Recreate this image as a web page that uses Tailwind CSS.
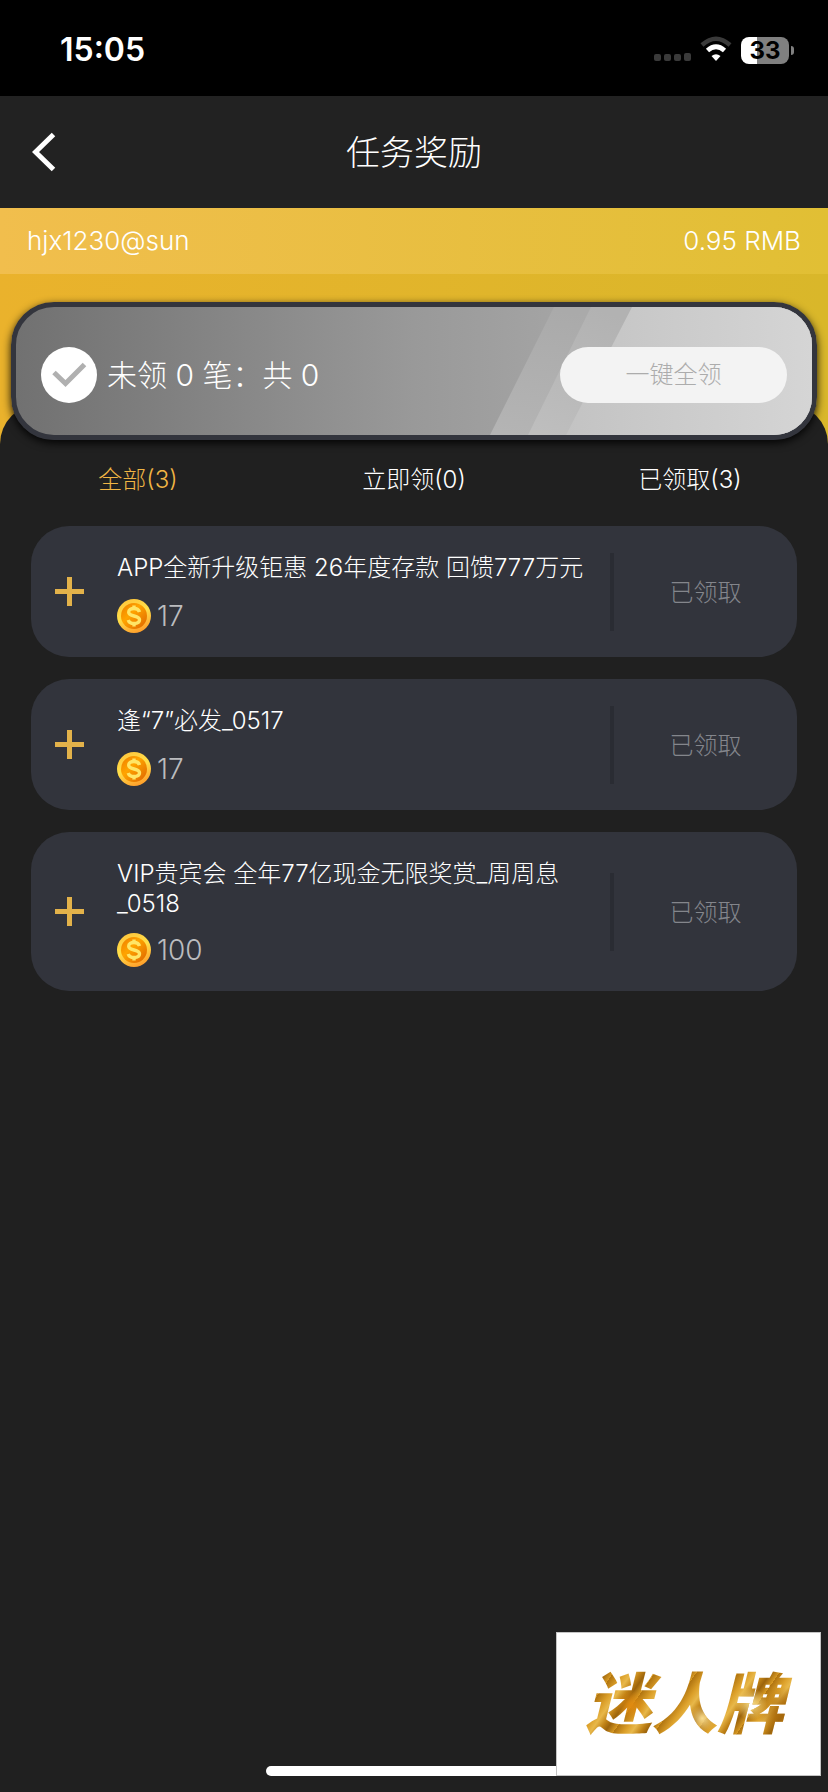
<!DOCTYPE html>
<html lang="zh-CN">
<head>
    <meta charset="UTF-8">
    <meta name="viewport" content="width=device-width, initial-scale=1.0">
    <title>任务奖励</title>
    <script src="https://cdn.jsdelivr.net/npm/@tailwindcss/browser@4"></script>
</head>
<body class="relative flex flex-col min-h-screen bg-[#202020] text-white font-light font-[Inter,'Noto_Sans_CJK_SC',sans-serif]">
    <!-- Status bar -->
    <div class="flex items-center justify-between h-24 pt-1 pl-[60px] pr-[34px] bg-black">
        <span class="text-[32px] font-semibold">15:05</span>
        <div class="flex items-center">
            <svg class="w-[38px] h-[28px]" viewBox="0 0 38 28" fill="#3a3a3a">
                <rect x="0" y="18" width="7" height="7" rx="2"/>
                <rect x="10" y="18" width="7" height="7" rx="2"/>
                <rect x="20" y="18" width="7" height="7" rx="2"/>
                <rect x="30" y="17" width="7" height="8" rx="2"/>
            </svg>
            <svg class="w-8 h-[28px] ml-2" viewBox="0 0 32 28" fill="none">
                <path d="M2 9 Q16 -3.500 30 9" stroke="#3a3a3a" stroke-width="4.5"/>
                <path d="M7.5 14.500 Q16 7 24.500 14.500" stroke="#fff" stroke-width="4.800"/>
                <path d="M16 25 L11.500 20 Q16 16.300 20.500 20 Z" fill="#fff"/>
            </svg>
            <div class="flex items-center ml-[9px]">
                <div class="w-12 h-[27px] rounded-lg bg-linear-to-r from-white from-33% to-[#808080] to-33% text-black text-2xl leading-[27px] font-bold text-center">33</div>
                <div class="w-[3px] h-[9px] ml-[2px] rounded-r-full bg-[#808080]"></div>
            </div>
        </div>
    </div>

    <!-- Title bar -->
    <header class="grid grid-cols-[1fr_auto_1fr] items-center h-28 px-8 bg-[#222222]">
        <button type="button" aria-label="返回" class="justify-self-start">
            <svg class="w-6 h-10" viewBox="0 0 24 40" fill="none" stroke="#fff" stroke-width="5">
                <path d="M21.500 2.500 L3.500 20 L21.500 37.500"/>
            </svg>
        </button>
        <h1 class="text-[34px]">任务奖励</h1>
    </header>

    <!-- Account and summary -->
    <section class="pb-2 bg-linear-to-r from-[#eab22c] to-[#d9b72a]">
        <div class="flex items-center justify-between h-[66px] px-[27px] pb-[2px] bg-linear-to-r from-[#f1be4d] to-[#e1bf34] text-[26px]">
            <span>hjx1230@sun</span>
            <span>0.95 RMB</span>
        </div>
        <div class="relative z-10 flex items-center h-[138px] mx-[11px] mt-7 pt-2 px-[25px] border-5 border-[#33353d] rounded-[43px] overflow-hidden shadow-[0_3px_8px_rgba(0,0,0,0.9)] bg-linear-to-r from-[#717171] via-[#999999] via-50% to-[#b8b8b8]">
            <svg class="absolute inset-0 w-full h-full" viewBox="0 0 796 128" preserveAspectRatio="xMaxYMid slice">
                <defs>
                    <linearGradient id="band-a" gradientUnits="userSpaceOnUse" x1="520" x2="500" y1="0" y2="128">
                        <stop offset="0" stop-color="#aaaaaa"/>
                        <stop offset="1" stop-color="#b4b4b4"/>
                    </linearGradient>
                    <linearGradient id="band-b" gradientUnits="userSpaceOnUse" x1="575" x2="530" y1="0" y2="128">
                        <stop offset="0" stop-color="#b2b2b2"/>
                        <stop offset="1" stop-color="#bebebe"/>
                    </linearGradient>
                    <linearGradient id="shine" x1="0" x2="1" y1="0" y2="0">
                        <stop offset="0" stop-color="#c3c3c3"/>
                        <stop offset="1" stop-color="#d5d5d5"/>
                    </linearGradient>
                </defs>
                <path d="M474 128 L538 0 H796 V128 Z" fill="url(#band-a)"/>
                <path d="M512 128 L575 0 H796 V128 Z" fill="url(#band-b)"/>
                <path d="M550 128 L616 0 H796 V128 Z" fill="url(#shine)"/>
            </svg>
            <svg class="relative w-14 h-14" viewBox="0 0 56 56" fill="none">
                <circle cx="28" cy="28" r="28" fill="#fff"/>
                <path d="M13 25.500 L24.500 36.500 L43.500 17.500" stroke="#b0b0b0" stroke-width="5"/>
            </svg>
            <p class="relative ml-[10px] text-[30px]">未领 0 笔：共 0</p>
            <button type="button" class="relative ml-auto w-[227px] h-14 rounded-full bg-[#f3f3f3] text-[#acacac] text-2xl">一键全领</button>
        </div>
    </section>

    <main class="-mt-11 pt-[52px] rounded-t-[40px] bg-[#202020]">
        <nav class="grid grid-cols-3 h-12 text-2xl">
            <button type="button" class="text-[#f0b544]">全部(3)</button>
            <button type="button">立即领(0)</button>
            <button type="button">已领取(3)</button>
        </nav>

        <ul id="task-list" class="flex flex-col gap-[22px] mt-[22px] px-[31px]"></ul>
    </main>

    <!-- Home indicator -->
    <div class="absolute bottom-4 left-1/2 -translate-x-1/2 w-[296px] h-[10px] rounded-full bg-white"></div>

    <!-- Brand badge -->
    <div class="absolute bottom-4 right-[7px] flex items-center justify-center w-[265px] h-[144px] border border-[#c4c4c4] bg-white">
        <span class="pl-2 pr-4 text-[66px] leading-[80px] font-black italic text-transparent bg-clip-text bg-[radial-gradient(circle_at_24%_52%,#e08a10_0%,transparent_9%),radial-gradient(circle_at_56%_68%,#f8dc90_0%,transparent_10%),radial-gradient(circle_at_78%_50%,#fbe08a_0%,transparent_9%),radial-gradient(circle_at_92%_60%,#a8690c_0%,transparent_12%),repeating-linear-gradient(125deg,#b07410_0px,#dca02a_9px,#e8b84a_15px,#c08216_22px,#9c640c_27px,#d89a24_34px)]">迷人牌</span>
    </div>

    <template id="task-template">
        <li class="flex items-center min-h-[131px] rounded-[38px] bg-[#32343c]">
            <svg class="shrink-0 w-[29px] h-[29px] ml-6" viewBox="0 0 29 29" stroke="#e3b24a" stroke-width="5">
                <path d="M14.500 0 V29 M0 14.500 H29"/>
            </svg>
            <div class="flex flex-1 flex-col justify-between gap-[14px] min-h-[131px] ml-[33px] pt-[27px] pb-6 pr-4">
                <h2 class="task-title text-2xl leading-[30px]"></h2>
                <div class="flex items-center h-[34px] gap-[6px]">
                    <svg class="w-[34px] h-[34px]" viewBox="0 0 34 34">
                        <defs>
                            <linearGradient id="coin-rim" x1="0.3" y1="0" x2="0.7" y2="1">
                                <stop offset="0" stop-color="#ffc63c"/>
                                <stop offset="0.45" stop-color="#ffe04a"/>
                                <stop offset="1" stop-color="#ff9a28"/>
                            </linearGradient>
                            <linearGradient id="coin-face" x1="0" y1="0" x2="1" y2="1">
                                <stop offset="0" stop-color="#ec7c00"/>
                                <stop offset="0.4" stop-color="#ffa400"/>
                                <stop offset="1" stop-color="#dc6200"/>
                            </linearGradient>
                        </defs>
                        <circle cx="17" cy="17" r="17" fill="url(#coin-rim)"/>
                        <circle cx="17" cy="17" r="13" fill="url(#coin-face)"/>
                        <path d="M22.500 13 C21.800 10.500 19.800 9.500 17 9.500 C14 9.500 11.700 10.800 11.700 13.300 C11.700 18.200 22.500 15.800 22.500 20.800 C22.500 23.300 20 24.500 17 24.500 C14 24.500 12 23.500 11.200 21 M17 6.500 V9.500 M17 24.500 V27.500" fill="none" stroke="#ffe566" stroke-width="3.400"/>
                    </svg>
                    <span class="task-amount text-[28px] leading-[34px] text-[#bbbcbf]"></span>
                </div>
            </div>
            <div class="shrink-0 w-1 h-[78px] bg-[#2a2c33]"></div>
            <div class="shrink-0 w-[183px] pt-[2px] text-center text-2xl text-[#84868c]">已领取</div>
        </li>
    </template>

    <script>
        const tasks = [
            { title: 'APP全新升级钜惠 26年度存款 回馈777万元', amount: 17 },
            { title: '逢“7”必发_0517', amount: 17 },
            { title: 'VIP贵宾会 全年77亿现金无限奖赏_周周息_0518', amount: 100 }
        ];
        const list = document.getElementById('task-list');
        const template = document.getElementById('task-template');

        tasks.forEach(task => {
            const item = template.content.cloneNode(true);
            item.querySelector('.task-title').textContent = task.title;
            item.querySelector('.task-amount').textContent = task.amount;
            list.appendChild(item);
        });
    </script>
</body>
</html>
